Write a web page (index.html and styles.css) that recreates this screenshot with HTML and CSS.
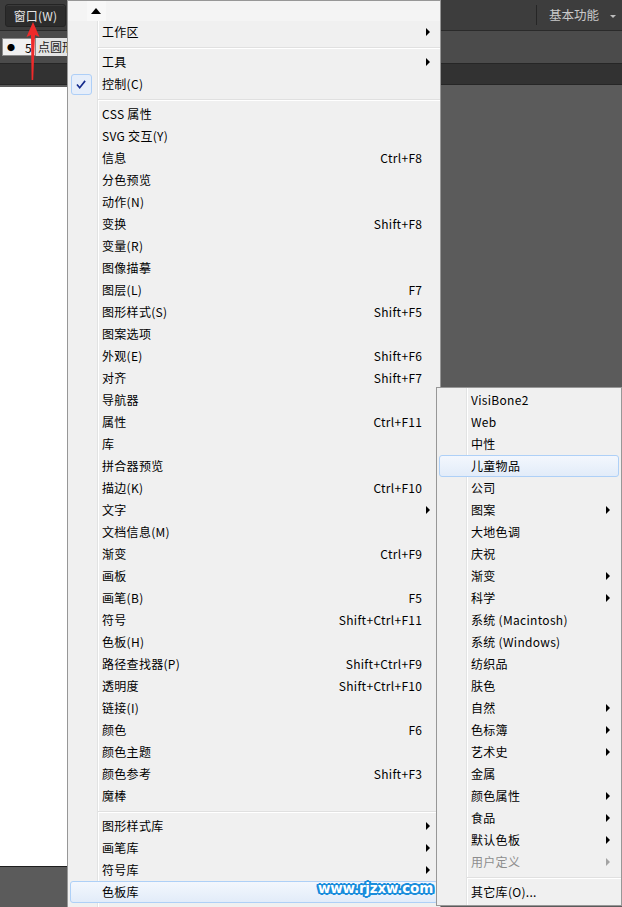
FILE: index.html
```html
<!DOCTYPE html>
<html>
<head>
<meta charset="utf-8">
<link rel="stylesheet" href="styles.css">
</head>
<body>
<div class="app">
  <header class="topbar">
    <div class="menu-btn">窗口(W)</div>
    <div class="ws-sep"></div>
    <div class="ws">基本功能</div>
    <span class="ws-caret"></span>
  </header>
  <div class="ctrlbar">
    <div class="ptbox"><span class="pt-dot">●</span><span class="pt-num">5</span></div>
    <span class="pt-label">点圆形</span>
  </div>
  <div class="band"></div>
  <div class="work">
    <div class="canvas"></div>
  </div>
</div>

<svg class="redarrow" width="70" height="90" viewBox="0 0 70 90">
  <polygon points="33,22 26.5,37 31,35 31.6,80 33.2,80 35,35 39.5,37" fill="#ee2a2a"/>
</svg>

<div class="menu main">
  <div class="scroll"><div class="scroll-btn"><span class="up"></span></div></div>
  <div class="item">工作区<span class="arr"></span></div>
  <div class="sep"></div>
  <div class="item">工具<span class="arr"></span></div>
  <div class="item"><span class="check"><svg width="21" height="21" viewBox="0 0 21 21"><polyline points="5.5,10.5 8.5,14 14.5,6.5" fill="none" stroke="#142a8c" stroke-width="1.8"/></svg></span>控制(C)</div>
  <div class="sep"></div>
  <div class="item">CSS 属性</div>
  <div class="item">SVG 交互(Y)</div>
  <div class="item">信息<span class="key">Ctrl+F8</span></div>
  <div class="item">分色预览</div>
  <div class="item">动作(N)</div>
  <div class="item">变换<span class="key">Shift+F8</span></div>
  <div class="item">变量(R)</div>
  <div class="item">图像描摹</div>
  <div class="item">图层(L)<span class="key">F7</span></div>
  <div class="item">图形样式(S)<span class="key">Shift+F5</span></div>
  <div class="item">图案选项</div>
  <div class="item">外观(E)<span class="key">Shift+F6</span></div>
  <div class="item">对齐<span class="key">Shift+F7</span></div>
  <div class="item">导航器</div>
  <div class="item">属性<span class="key">Ctrl+F11</span></div>
  <div class="item">库</div>
  <div class="item">拼合器预览</div>
  <div class="item">描边(K)<span class="key">Ctrl+F10</span></div>
  <div class="item">文字<span class="arr"></span></div>
  <div class="item">文档信息(M)</div>
  <div class="item">渐变<span class="key">Ctrl+F9</span></div>
  <div class="item">画板</div>
  <div class="item">画笔(B)<span class="key">F5</span></div>
  <div class="item">符号<span class="key">Shift+Ctrl+F11</span></div>
  <div class="item">色板(H)</div>
  <div class="item">路径查找器(P)<span class="key">Shift+Ctrl+F9</span></div>
  <div class="item">透明度<span class="key">Shift+Ctrl+F10</span></div>
  <div class="item">链接(I)</div>
  <div class="item">颜色<span class="key">F6</span></div>
  <div class="item">颜色主题</div>
  <div class="item">颜色参考<span class="key">Shift+F3</span></div>
  <div class="item">魔棒</div>
  <div class="sep"></div>
  <div class="item">图形样式库<span class="arr"></span></div>
  <div class="item">画笔库<span class="arr"></span></div>
  <div class="item">符号库<span class="arr"></span></div>
  <div class="item hl">色板库</div>
</div>

<div class="menu sub">
  <div class="item">VisiBone2</div>
  <div class="item">Web</div>
  <div class="item">中性</div>
  <div class="item hl">儿童物品</div>
  <div class="item">公司</div>
  <div class="item">图案<span class="arr"></span></div>
  <div class="item">大地色调</div>
  <div class="item">庆祝</div>
  <div class="item">渐变<span class="arr"></span></div>
  <div class="item">科学<span class="arr"></span></div>
  <div class="item">系统 (Macintosh)</div>
  <div class="item">系统 (Windows)</div>
  <div class="item">纺织品</div>
  <div class="item">肤色</div>
  <div class="item">自然<span class="arr"></span></div>
  <div class="item">色标簿<span class="arr"></span></div>
  <div class="item">艺术史<span class="arr"></span></div>
  <div class="item">金属</div>
  <div class="item">颜色属性<span class="arr"></span></div>
  <div class="item">食品<span class="arr"></span></div>
  <div class="item">默认色板<span class="arr"></span></div>
  <div class="item disabled">用户定义<span class="arr"></span></div>
  <div class="sep"></div>
  <div class="item">其它库(O)...</div>
</div>

<div class="wm">www.rjzxw.com</div>
</body>
</html>
```
FILE: styles.css
```css
html, body {
  margin: 0;
  padding: 0;
}
body {
  width: 622px;
  height: 907px;
  overflow: hidden;
  position: relative;
  background: #5b5b5b;
  font-family: "Noto Sans CJK SC", "Noto Sans", sans-serif;
  font-size: 12px;
}
.app {
  display: flex;
  flex-direction: column;
  height: 907px;
}
.topbar {
  height: 30px;
  background: #3d3d3d;
  border-bottom: 1px solid #2a2a2a;
  display: flex;
  align-items: center;
}
.menu-btn {
  margin-left: 5px;
  width: 61px;
  height: 23px;
  box-sizing: border-box;
  background: #2c2c2c;
  border: 1px solid #242424;
  border-radius: 3px;
  box-shadow: inset 0 1px 0 #3a3a3a;
  color: #e6e6e6;
  font-size: 12px;
  line-height: 21px;
  text-align: center;
  letter-spacing: 0.2px;
}
.ws-sep {
  margin-left: auto;
  width: 1px;
  height: 20px;
  background: #262626;
  margin-right: 12px;
}
.ws {
  color: #cacaca;
  font-size: 12.5px;
  line-height: 20px;
}
.ws-caret {
  margin-left: 11px;
  margin-right: 6px;
  margin-top: 3px;
  width: 0;
  height: 0;
  border-left: 3px solid transparent;
  border-right: 3px solid transparent;
  border-top: 3px solid #bdbdbd;
}
.ctrlbar {
  height: 32px;
  background: #4b4b4b;
  border-bottom: 1px solid #262626;
  display: flex;
  align-items: center;
}
.ptbox {
  margin-left: 2px;
  width: 34px;
  height: 18px;
  box-sizing: border-box;
  background: #f0f0f0;
  border: 1px solid #8a8a8a;
  display: flex;
  align-items: center;
  color: #000;
}
.pt-dot {
  font-size: 8px;
  margin-left: 4px;
}
.pt-num {
  margin-left: 10px;
  font-size: 12px;
}
.pt-label {
  height: 18px;
  line-height: 18px;
  background: #e4e4e4;
  color: #222;
  padding: 0 4px 0 2px;
}
.band {
  height: 20px;
  background: #323232;
  border-bottom: 1px solid #262626;
}
.work {
  flex: 1;
  background: #5b5b5b;
  padding-top: 2px;
}
.canvas {
  width: 67px;
  height: 779px;
  background: #ffffff;
  border-bottom: 1px solid #1e1e1e;
}
.redarrow {
  position: absolute;
  left: 0;
  top: 0;
}
.menu {
  position: absolute;
  box-sizing: border-box;
  background-color: #f0f0f0;
  background-image: linear-gradient(to right, transparent 29px, #e2e3e3 29px, #e2e3e3 30px, #ffffff 30px, #ffffff 31px, transparent 31px);
  border: 1px solid #979797;
  color: #000;
}
.main {
  left: 67px;
  top: 0;
  width: 374px;
  height: 930px;
  z-index: 2;
}
.sub {
  left: 436px;
  top: 387px;
  width: 186px;
  height: 519px;
  padding-top: 1px;
  z-index: 3;
}
.scroll {
  height: 20px;
  background: #f4f4f4;
  display: flex;
}
.scroll-btn {
  margin-left: 19px;
  width: 19px;
  height: 20px;
  background: #f8f8f8;
  display: flex;
  align-items: center;
  justify-content: center;
}
.up {
  width: 0;
  height: 0;
  border-left: 5px solid transparent;
  border-right: 5px solid transparent;
  border-bottom: 6px solid #000;
  margin-left: -2px;
}
.item {
  height: 22px;
  box-sizing: border-box;
  display: flex;
  align-items: center;
  padding: 0 18px 0 34px;
  white-space: nowrap;
  line-height: 22px;
  letter-spacing: 0.3px;
}
.sub .item {
  padding-right: 11px;
}
.key {
  margin-left: auto;
  margin-right: -0.3px;
}
.arr {
  margin-left: auto;
  margin-right: -8px;
  width: 0;
  height: 0;
  border-top: 4px solid transparent;
  border-bottom: 4px solid transparent;
  border-left: 4px solid #000;
}
.sub .arr {
  margin-right: 0;
}
.check {
  margin-left: -31px;
  margin-right: 10px;
  width: 21px;
  height: 21px;
  box-sizing: border-box;
  border: 1px solid #aecff7;
  border-radius: 3px;
  background: #e6eefa;
  display: flex;
  align-items: center;
  justify-content: center;
}
.check svg {
  display: block;
}
.sep {
  height: 8px;
  margin-left: 30px;
  background:
    linear-gradient(#e0e0e0, #e0e0e0) no-repeat 0 4px / 100% 1px,
    linear-gradient(#ffffff, #ffffff) no-repeat 0 5px / 100% 1px;
}
.item.hl {
  margin: 0 2px;
  padding-left: 31px;
  border: 1px solid #aed0f7;
  border-radius: 3px;
  background: linear-gradient(#f3f7fd, #e2ecf9);
}
.disabled {
  color: #8d8d8d;
}
.disabled .arr {
  border-left-color: #a3a3a3;
}
.wm {
  position: absolute;
  left: 318px;
  top: 880px;
  z-index: 4;
  font-family: "DejaVu Sans", sans-serif;
  font-weight: bold;
  font-size: 13.5px;
  letter-spacing: -0.2px;
  line-height: 16px;
  color: #ffffff;
  text-shadow:
    1px 0 0 #1a8ddc, -1px 0 0 #1a8ddc, 0 1px 0 #1a8ddc, 0 -1px 0 #1a8ddc,
    1px 1px 0 #1a8ddc, -1px -1px 0 #1a8ddc, 1px -1px 0 #1a8ddc, -1px 1px 0 #1a8ddc,
    2px 0 0 #1a8ddc, -2px 0 0 #1a8ddc, 0 2px 0 #1a8ddc, 0 -2px 0 #1a8ddc,
    2px 1px 0 #1a8ddc, -2px 1px 0 #1a8ddc, 2px -1px 0 #1a8ddc, -2px -1px 0 #1a8ddc;
}
```
